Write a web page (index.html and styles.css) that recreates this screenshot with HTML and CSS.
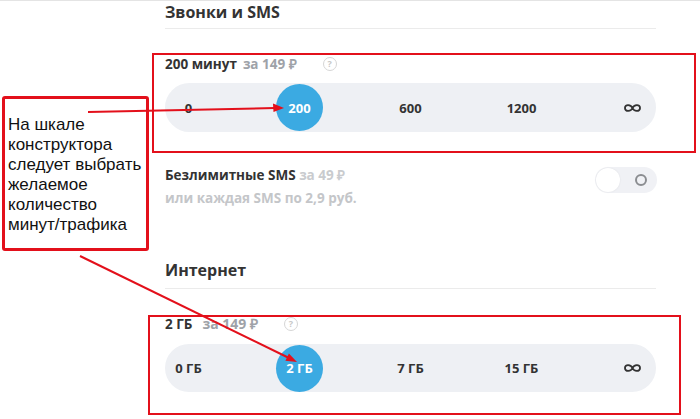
FILE: index.html
```html
<!DOCTYPE html>
<html lang="ru">
<head>
    <meta charset="UTF-8">
    <meta name="viewport" content="width=device-width, initial-scale=1.0">
    <title>Конструктор тарифа</title>
    <link rel="stylesheet" href="styles.css">
</head>
<body>
    <div class="page">
        <section class="group">
            <h2 class="group-title">Звонки и SMS</h2>
            <div class="option">
                <div class="option-head">
                    <span class="amount">200 минут</span>
                    <span class="price">за 149 ₽</span>
                    <span class="hint">?</span>
                </div>
                <div class="scale">
                    <span class="step">0</span>
                    <span class="step active">200</span>
                    <span class="step">600</span>
                    <span class="step">1200</span>
                    <span class="step"><svg class="inf" width="19" height="12" viewBox="0 0 19 12"><path d="M9.5 6C8 2.5 2 1.8 2 6S8 9.5 9.5 6 17 1.8 17 6 11 9.5 9.5 6Z"/></svg></span>
                </div>
            </div>
            <div class="sms">
                <div class="sms-text">
                    <div><span class="amount">Безлимитные SMS</span> <span class="price light">за 49 ₽</span></div>
                    <div class="sms-note">или каждая SMS по 2,9 руб.</div>
                </div>
                <div class="toggle">
                    <span class="knob"></span>
                    <span class="ring"></span>
                </div>
            </div>
        </section>
        <section class="group">
            <h2 class="group-title">Интернет</h2>
            <div class="option">
                <div class="option-head">
                    <span class="amount">2 ГБ</span>
                    <span class="price wide">за 149 ₽</span>
                    <span class="hint">?</span>
                </div>
                <div class="scale short">
                    <span class="step">0 ГБ</span>
                    <span class="step active">2 ГБ</span>
                    <span class="step">7 ГБ</span>
                    <span class="step">15 ГБ</span>
                    <span class="step"><svg class="inf" width="19" height="12" viewBox="0 0 19 12"><path d="M9.5 6C8 2.5 2 1.8 2 6S8 9.5 9.5 6 17 1.8 17 6 11 9.5 9.5 6Z"/></svg></span>
                </div>
            </div>
        </section>
    </div>

    <!-- annotation layer drawn over the screenshot -->
    <div class="frame frame-min"></div>
    <div class="frame frame-net"></div>
    <div class="note">На шкале<br>конструктора<br>следует выбрать<br>желаемое<br>количество<br>минут/трафика</div>
    <svg class="arrows" width="700" height="419" viewBox="0 0 700 419">
        <line x1="88" y1="112" x2="275" y2="108" stroke="#e3101b" stroke-width="2"/>
        <polygon points="284,108 273,103.5 273.5,112" fill="#e3101b"/>
        <line x1="80" y1="256" x2="289" y2="358" stroke="#e3101b" stroke-width="2"/>
        <polygon points="297,362 285.4,360.8 288.9,353.6" fill="#e3101b"/>
    </svg>
</body>
</html>
```

FILE: styles.css
```css
body {
    margin: 0;
    border-top: 1px solid #e4e4e4;
    background: #fff;
    font-family: "Open Sans", Arial, sans-serif;
    color: #333;
    position: relative;
    height: 418px;
    overflow: hidden;
}
.page {
    width: 491px;
    margin-left: 165px;
}
.group-title {
    margin: 0;
    font-size: 16px;
    font-weight: 700;
    line-height: 24px;
    padding-bottom: 4px;
    border-bottom: 1px solid #ebebeb;
    margin-top: -1px;
}
.group + .group .group-title {
    margin-top: 48px;
    padding-bottom: 6px;
}
.option {
    margin-top: 26px;
}
.option-head {
    display: flex;
    align-items: center;
    gap: 6px;
    font-size: 13.5px;
    font-weight: 700;
    line-height: 18px;
}
.amount {
    color: #333;
    font-weight: 700;
}
.price {
    color: #9ea2a8;
}
.price.wide {
    margin-left: 4px;
    font-size: 14px;
}
.price.light {
    color: #c9cbce;
}
.hint {
    margin-left: 20px;
    width: 12px;
    height: 12px;
    border: 1px solid #d6d6d6;
    border-radius: 50%;
    color: #c8c8c8;
    font-size: 9px;
    line-height: 12px;
    text-align: center;
}
.scale {
    margin-top: 10px;
    height: 49px;
    border-radius: 25px;
    background: #eef0f4;
    display: flex;
    align-items: center;
    justify-content: space-between;
}
.scale.short {
    margin-top: 11px;
    height: 48px;
}
.step {
    width: 47px;
    height: 47px;
    border-radius: 50%;
    display: flex;
    align-items: center;
    justify-content: center;
    font-size: 13px;
    font-weight: 700;
    color: #333;
}
.step.active {
    background: #3baae2;
    color: #fff;
}
.inf {
    fill: none;
    stroke: #333;
    stroke-width: 1.9;
}
.sms {
    margin-top: 32px;
    display: flex;
    justify-content: space-between;
    align-items: flex-start;
}
.sms-text {
    font-size: 13.5px;
    font-weight: 700;
    line-height: 23px;
}
.sms-note {
    color: #c4c6c9;
}
.toggle {
    margin-top: 3px;
    margin-right: -1px;
    width: 62px;
    height: 26px;
    border-radius: 13px;
    background: #f0f1f5;
    display: flex;
    align-items: center;
    justify-content: space-between;
    padding: 0 10px 0 1px;
    box-sizing: border-box;
}
.knob {
    width: 24px;
    height: 24px;
    border-radius: 50%;
    background: #fff;
    box-shadow: 0 0 2px rgba(0, 0, 0, 0.08);
}
.ring {
    width: 8px;
    height: 8px;
    border-radius: 50%;
    border: 2px solid #8b8d91;
}
.frame {
    position: absolute;
    border: 2px solid #e3101b;
    pointer-events: none;
}
.frame-min {
    left: 152px;
    top: 52px;
    width: 540px;
    height: 96px;
}
.frame-net {
    left: 148px;
    top: 314px;
    width: 529px;
    height: 96px;
}
.note {
    position: absolute;
    left: 2px;
    top: 95px;
    width: 138px;
    height: 133px;
    border: 3px solid #e3101b;
    border-radius: 3px;
    padding: 16px 0 0 3px;
    font-family: "Liberation Sans", Arial, sans-serif;
    font-size: 17px;
    line-height: 20px;
    color: #111;
    background: #fff;
}
.arrows {
    position: absolute;
    left: 0;
    top: -1px;
    pointer-events: none;
}
```
